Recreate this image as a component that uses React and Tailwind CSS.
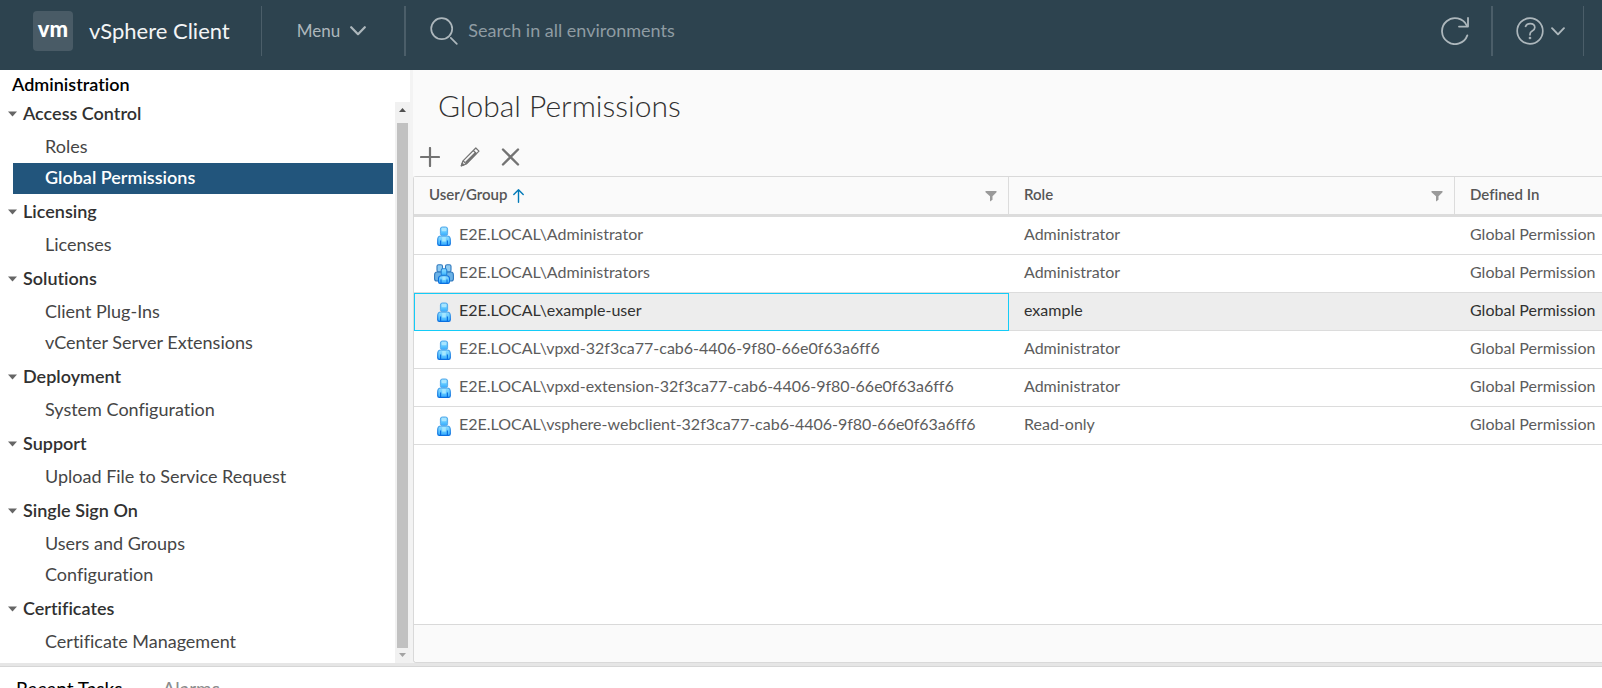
import React from "react";

const navigation = [
  { title: "Access Control", items: ["Roles", "Global Permissions"] },
  { title: "Licensing", items: ["Licenses"] },
  { title: "Solutions", items: ["Client Plug-Ins", "vCenter Server Extensions"] },
  { title: "Deployment", items: ["System Configuration"] },
  { title: "Support", items: ["Upload File to Service Request"] },
  { title: "Single Sign On", items: ["Users and Groups", "Configuration"] },
  { title: "Certificates", items: ["Certificate Management"] },
];

const permissions = [
  { name: "E2E.LOCAL\\Administrator", role: "Administrator", scope: "Global Permission" },
  { name: "E2E.LOCAL\\Administrators", role: "Administrator", scope: "Global Permission", group: true },
  { name: "E2E.LOCAL\\example-user", role: "example", scope: "Global Permission", selected: true },
  { name: "E2E.LOCAL\\vpxd-32f3ca77-cab6-4406-9f80-66e0f63a6ff6", role: "Administrator", scope: "Global Permission" },
  { name: "E2E.LOCAL\\vpxd-extension-32f3ca77-cab6-4406-9f80-66e0f63a6ff6", role: "Administrator", scope: "Global Permission" },
  { name: "E2E.LOCAL\\vsphere-webclient-32f3ca77-cab6-4406-9f80-66e0f63a6ff6", role: "Read-only", scope: "Global Permission" },
];

function Chevron({ className }) {
  return (
    <svg className={className} viewBox="0 0 16 10" fill="none" stroke="currentColor" strokeWidth="2.200" strokeLinecap="round" strokeLinejoin="round" aria-hidden="true">
      <path d="M1.2 1.2 8 8.2l6.8-7" />
    </svg>
  );
}

function FilterIcon() {
  return (
    <svg className="h-3 w-3 fill-[#9a9a9a]" viewBox="0 0 12 12" aria-hidden="true">
      <path d="M.5 1h11v1.2L7.5 6.2v3.6L5 11.5V6.2L.5 2.200z" />
    </svg>
  );
}

function IconGradients() {
  return (
    <svg className="absolute h-0 w-0" aria-hidden="true">
      <defs>
        <linearGradient id="person" x1="0" y1="0" x2="0" y2="1">
          <stop offset="0" stopColor="#8fdcff" />
          <stop offset="0.6" stopColor="#5cc6ff" />
          <stop offset="1" stopColor="#35aaff" />
        </linearGradient>
        <linearGradient id="personEdge" x1="0" y1="0" x2="0" y2="1">
          <stop offset="0" stopColor="#4ba6ec" />
          <stop offset="1" stopColor="#0a6fe0" />
        </linearGradient>
      </defs>
    </svg>
  );
}

function UserIcon() {
  return (
    <svg className="h-5 w-5 shrink-0" viewBox="0 0 20 20" strokeLinejoin="round" aria-hidden="true">
      <path d="M7 10h6c2.200 0 3.300 1.600 3.300 3.800v3.900q0 1.600-1.600 1.600H5.300q-1.600 0-1.600-1.600v-3.900c0-2.200 1.100-3.800 3.300-3.800z" fill="url(#person)" stroke="url(#personEdge)" strokeWidth="1.200" />
      <rect x="6.400" y="1" width="7.200" height="8.600" rx="2" fill="url(#person)" stroke="#55a9ea" strokeWidth="1" />
      <rect x="7.600" y="2" width="4.800" height="3.200" rx="1" fill="#a9e5ff" />
      <path d="M8.200 11h3.600v4.500H8.200z" fill="#a3e6ff" />
      <path d="M6.600 14.600v4.300M13.400 14.600v4.300" stroke="#0a6fe0" strokeWidth="1.200" />
    </svg>
  );
}

function GroupIcon() {
  return (
    <svg className="h-5 w-5 shrink-0" viewBox="0 0 20 20" strokeLinejoin="round" aria-hidden="true">
      <g fill="#6bb2e6" stroke="#2f78bd" strokeWidth="1.100">
        <path d="M3 8h4.500l2 2v7H3q-2.400 0-2.400-2v-4q0-3 2.400-3z" />
        <path d="M17 8h-4.500l-2 2v7H17q2.400 0 2.400-2v-4q0-3-2.400-3z" />
        <rect x="3" y=".8" width="5.500" height="7" rx="1.500" fill="#8ecbf2" />
        <rect x="11.500" y=".8" width="5.500" height="7" rx="1.500" fill="#8ecbf2" />
      </g>
      <path d="M7.500 11.700h5q3 0 3 3v3q0 1.700-1.600 1.700H6.100q-1.600 0-1.600-1.700v-3q0-3 3-3z" fill="url(#person)" stroke="#0a6fe0" strokeWidth="1.100" />
      <rect x="7.200" y="4.800" width="5.600" height="6.600" rx="1.500" fill="url(#person)" stroke="#2384d8" strokeWidth="1.100" />
      <path d="M8.400 12.500h3.200v3.400H8.400z" fill="#a3e6ff" />
      <path d="M7 15.600V19M13 15.600V19" stroke="#0a6fe0" strokeWidth="1.100" />
    </svg>
  );
}

function Header() {
  return (
    <header className="flex shrink-0 bg-[#2d434f] pt-[6px] pb-[14px] text-[#adb7bc]">
      <div className="flex h-[50px] items-center gap-4 border-r border-[#4b5e69] pr-[31px] pl-[33px]">
        <span className="flex h-10 w-10 items-center justify-center rounded bg-[#495b66] pb-1 text-[22px] leading-none font-black text-white">vm</span>
        <span className="pb-[2px] text-[22px] text-[#f3f5f6]">vSphere Client</span>
      </div>
      <button type="button" className="flex h-[50px] items-center gap-[10px] border-r-2 border-[#4b5e69] pr-[38px] pl-[35px] text-[17px]">
        Menu
        <Chevron className="h-[10px] w-4" />
      </button>
      <label className="flex h-[50px] min-w-0 flex-1 items-center gap-[10px] pl-6">
        <svg className="h-7 w-7 shrink-0" viewBox="0 0 28 28" fill="none" stroke="currentColor" strokeWidth="1.700" strokeLinecap="round" aria-hidden="true">
          <circle cx="11.700" cy="11.700" r="10.500" />
          <path d="m20.800 20.800 6 6" />
        </svg>
        <input type="text" aria-label="Search" placeholder="Search in all environments" className="min-w-0 flex-1 bg-transparent pb-[2px] text-[18px] outline-none placeholder:text-[#8f9ca3]" />
      </label>
      <button type="button" aria-label="Refresh" className="flex h-[50px] items-center border-r-2 border-[#4b5e69] px-[22px]">
        <svg className="h-7 w-7" viewBox="0 0 28 28" fill="none" stroke="currentColor" strokeWidth="1.800" strokeLinecap="round" strokeLinejoin="round" aria-hidden="true">
          <path d="M26.300 18.400A13 13 0 1 1 25.800 8.600" />
          <path d="M27 1v8.600h-9" />
        </svg>
      </button>
      <button type="button" aria-label="Help" className="mr-[18px] flex h-[50px] items-center gap-[7px] border-r border-[#4b5e69] pr-[18px] pl-[23px]">
        <svg className="h-7 w-7" viewBox="0 0 28 28" fill="none" stroke="currentColor" strokeWidth="1.700" strokeLinecap="round" aria-hidden="true">
          <circle cx="14" cy="14" r="12.800" />
          <path d="M9.600 9.300c.8-1.800 2.500-2.700 4.500-2.700 2.700 0 4.700 1.600 4.700 3.900 0 1.800-1.200 2.800-2.600 3.600-1.500.9-2.200 1.400-2.200 3.100v.6" />
          <circle cx="14" cy="21" r=".5" />
        </svg>
        <Chevron className="h-[9px] w-[14px]" />
      </button>
    </header>
  );
}

function Sidebar() {
  return (
    <aside className="flex w-[410px] shrink-0 flex-col bg-white">
      <h2 className="h-[26px] shrink-0 pl-3 text-[18px] leading-[28px] font-semibold text-black">Administration</h2>
      <div className="flex min-h-0 flex-1">
        <nav className="min-w-0 flex-1 overflow-hidden pr-[2px]">
          {navigation.map((section) => (
            <section key={section.title}>
              <button type="button" className="flex h-9 w-full items-center gap-[6px] pb-[2px] pl-2 text-[18px] font-semibold text-[#313131]">
                <svg className="mt-[2px] h-[6px] w-[9px] fill-[#666]" viewBox="0 0 9 6" aria-hidden="true">
                  <path d="M0 .5h9L4.500 5.500z" />
                </svg>
                {section.title}
              </button>
              <ul>
                {section.items.map((item) => {
                  const active = item === "Global Permissions";
                  return (
                    <li key={item} className="pl-[13px]">
                      <a
                        href="#"
                        aria-current={active ? "page" : undefined}
                        className={
                          active
                            ? "block h-[31px] bg-[#22557c] pl-8 text-[18px] leading-[29px] font-semibold text-white"
                            : "block h-[31px] pl-8 text-[18px] leading-[29px] text-[#454545]"
                        }
                      >
                        {item}
                      </a>
                    </li>
                  );
                })}
              </ul>
            </section>
          ))}
        </nav>
        <div className="mt-[6px] flex w-[15px] shrink-0 flex-col items-center bg-[#f1f1f1]" aria-hidden="true">
          <svg className="h-[21px] w-[7px] shrink-0 fill-[#505050]" viewBox="0 0 7 21">
            <path d="M3.500 6 7 10H0z" />
          </svg>
          <div className="w-[11px] flex-1 bg-[#c1c1c1]" />
          <svg className="h-[15px] w-[7px] shrink-0 fill-[#a3a3a3]" viewBox="0 0 7 15">
            <path d="M0 5h7L3.500 9z" />
          </svg>
        </div>
      </div>
    </aside>
  );
}

function Toolbar() {
  return (
    <div className="flex h-[38px] items-center gap-5 pl-[7px] text-[#737373]">
      <button type="button" aria-label="Add permission">
        <svg className="h-5 w-5" viewBox="0 0 20 20" fill="none" stroke="currentColor" strokeWidth="2.200" strokeLinecap="round" aria-hidden="true">
          <path d="M10 1v18M1 10h18" />
        </svg>
      </button>
      <button type="button" aria-label="Edit permission">
        <svg className="h-5 w-5" viewBox="0 0 20 20" fill="none" stroke="currentColor" strokeWidth="1.200" strokeLinejoin="round" aria-hidden="true">
          <path d="M15.800 1 19 4.200 6.300 17l-5.100 1.900L3 13.800z" />
          <path d="m13.300 3.500 3.200 3.200M3 13.800 6.300 17" />
          <path d="M16.200 5.600 6 15.800" strokeWidth="2.600" />
          <path d="M1.400 18.700 2.200 16.200 3.900 17.900z" fill="currentColor" />
        </svg>
      </button>
      <button type="button" aria-label="Remove permission">
        <svg className="h-5 w-5" viewBox="0 0 20 20" fill="none" stroke="currentColor" strokeWidth="2.400" strokeLinecap="round" aria-hidden="true">
          <path d="m3 2.500 15 15M18 2.500l-15 15" />
        </svg>
      </button>
    </div>
  );
}

function PermissionsTable() {
  return (
    <div className="flex min-h-0 flex-1 flex-col rounded-l-[3px] border-t border-b border-l border-[#d9d9d9] bg-white">
      <div className="min-h-0 flex-1 overflow-hidden">
        <table className="w-full table-fixed border-separate border-spacing-0 text-left text-[16px] whitespace-nowrap text-[#5c5c5c]">
          <colgroup>
            <col className="w-[595px]" />
            <col className="w-[446px]" />
            <col />
          </colgroup>
          <thead>
            <tr className="h-10 bg-[#fafafa] text-[15px] text-[#565656]">
              <th className="border-r border-b-3 border-[#dcdcdc] px-[15px] pb-[2px] font-semibold">
                <div className="flex items-center">
                  User/Group
                  <svg className="mt-[2px] ml-[6px] h-[14px] w-[11px]" viewBox="0 0 11 14" fill="none" stroke="#0079b8" strokeWidth="1.400" strokeLinecap="round" strokeLinejoin="round" role="img" aria-label="Sorted ascending">
                    <path d="M5.500 13.300V1M.8 5.500 5.500.8l4.700 4.700" />
                  </svg>
                  <button type="button" aria-label="Filter User/Group" className="mt-[2px] -mr-1 ml-auto"><FilterIcon /></button>
                </div>
              </th>
              <th className="border-r border-b-3 border-[#dcdcdc] px-[15px] pb-[2px] font-semibold">
                <div className="flex items-center">
                  Role
                  <button type="button" aria-label="Filter Role" className="mt-[2px] -mr-1 ml-auto"><FilterIcon /></button>
                </div>
              </th>
              <th className="border-b-3 border-[#dcdcdc] pb-[2px] pl-[15px] font-semibold">Defined In</th>
            </tr>
          </thead>
          <tbody>
            {permissions.map((row) => (
              <tr key={row.name} className={row.selected ? "h-[38px] bg-[#ededed] text-[#313131]" : "h-[38px]"}>
                <td
                  className={
                    row.selected
                      ? "border-b border-[#dcdcdc] pl-5 outline outline-1 -outline-offset-1 outline-[#14ccf8]"
                      : "border-b border-[#dcdcdc] pl-5"
                  }
                >
                  <div className="flex items-center gap-[5px]">
                    {row.group ? <GroupIcon /> : <UserIcon />}
                    <span className="pb-[3px]">{row.name}</span>
                  </div>
                </td>
                <td className="border-b border-[#dcdcdc] pb-[3px] pl-[15px]">{row.role}</td>
                <td className="border-b border-[#dcdcdc] pb-[3px] pl-[15px]">{row.scope}</td>
              </tr>
            ))}
          </tbody>
        </table>
      </div>
      <div className="h-[38px] shrink-0 rounded-bl-[3px] border-t border-[#d9d9d9] bg-[#fafafa]" />
    </div>
  );
}

export default function App() {
  return (
    <div className="flex h-screen flex-col overflow-hidden bg-white font-[Lato,sans-serif] [font-variant-ligatures:none]">
      <IconGradients />
      <Header />
      <div className="flex min-h-0 flex-1">
        <Sidebar />
        <div className="w-[3px] shrink-0 bg-[#f3f3f3]" />
        <main className="flex min-w-0 flex-1 flex-col bg-[#fafafa]">
          <h1 className="pt-[15px] pb-[13px] pl-[25px] text-[30px] leading-10 font-light text-[#313131]">Global Permissions</h1>
          <Toolbar />
          <PermissionsTable />
        </main>
      </div>
      <footer className="shrink-0 border-t-3 border-[#e6e6e6]">
        <div className="flex h-[22px] items-start gap-10 overflow-hidden border-t border-[#d6d6d6] pt-2 pl-4 text-[19px]">
          <button type="button" className="shrink-0 text-black">Recent Tasks</button>
          <button type="button" className="shrink-0 text-[#8c8c8c]">Alarms</button>
        </div>
      </footer>
    </div>
  );
}
